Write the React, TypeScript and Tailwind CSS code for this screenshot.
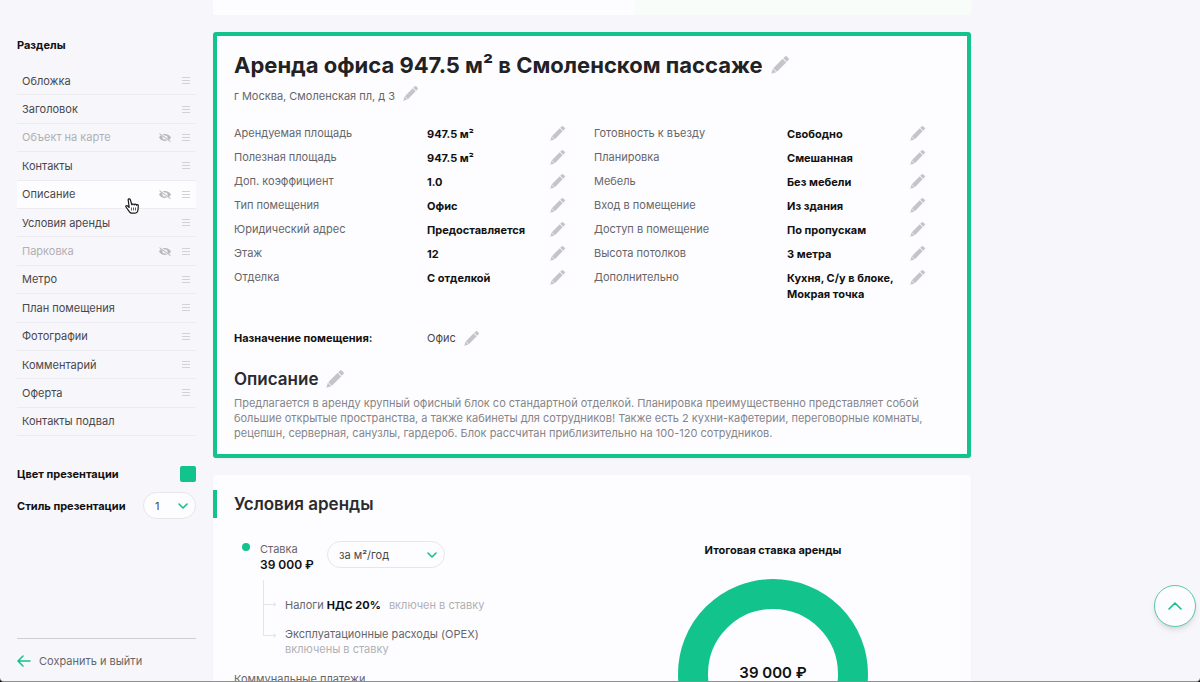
import { useState } from "react";

type Section = {
  name: string;
  hidden?: boolean;
  active?: boolean;
  toggle?: boolean;
  fixed?: boolean;
};

const sections: Section[] = [
  { name: "Обложка" },
  { name: "Заголовок" },
  { name: "Объект на карте", hidden: true, toggle: true },
  { name: "Контакты" },
  { name: "Описание", active: true, toggle: true },
  { name: "Условия аренды" },
  { name: "Парковка", hidden: true, toggle: true },
  { name: "Метро" },
  { name: "План помещения" },
  { name: "Фотографии" },
  { name: "Комментарий" },
  { name: "Оферта" },
  { name: "Контакты подвал", fixed: true },
];

const leftFacts = [
  ["Арендуемая площадь", "947.5 м²"],
  ["Полезная площадь", "947.5 м²"],
  ["Доп. коэффициент", "1.0"],
  ["Тип помещения", "Офис"],
  ["Юридический адрес", "Предоставляется"],
  ["Этаж", "12"],
  ["Отделка", "С отделкой"],
];

const rightFacts = [
  ["Готовность к въезду", "Свободно"],
  ["Планировка", "Смешанная"],
  ["Мебель", "Без мебели"],
  ["Вход в помещение", "Из здания"],
  ["Доступ в помещение", "По пропускам"],
  ["Высота потолков", "3 метра"],
  ["Дополнительно", "Кухня, С/у в блоке, Мокрая точка"],
];

function EditButton({ label, large }: { label: string; large?: boolean }) {
  return (
    <button type="button" aria-label={`Изменить: ${label}`} className="shrink-0 text-[#c5c4ca]">
      <svg viewBox="0 0 16 16" fill="currentColor" className={large ? "size-[18px]" : "size-[15px]"}>
        <path d="M10.9 1.9 12.3.6a1.4 1.4 0 0 1 2 0l1.1 1.1a1.4 1.4 0 0 1 0 2l-1.3 1.4z" />
        <path d="M10.3 2.5 13.5 5.7 5.2 14 2 10.8z" />
        <path d="M1.6 11.3 4.7 14.4.3 15.8z" />
      </svg>
    </button>
  );
}

function EyeOffIcon() {
  return (
    <svg viewBox="0 0 12 9" className="h-[9px] w-3" fill="#b9b9bd">
      <path d="M3.6 1.3C7 .2 10.5 1.6 12 4.5c-.5 1-1.1 1.8-1.9 2.4L8.5 5.7C9.1 3.7 7.7 2 5.5 2.6z" />
      <path d="M1.9 2.2 3.5 3.4C3 5.4 4.5 7 6.7 6.4l1.5 1.2C4.9 8.8 1.5 7.4 0 4.5c.5-.9 1.1-1.7 1.9-2.3z" />
      <path d="M.8.3 11.8 8.2l-.6.8L.2 1.1z" />
    </svg>
  );
}

function Chevron() {
  return (
    <svg
      viewBox="0 0 10 6"
      className="pointer-events-none absolute top-1/2 right-2 h-1.5 w-2.5 -translate-y-1/2"
      fill="none"
      stroke="#15c08a"
      strokeWidth="1.6"
      strokeLinecap="round"
      strokeLinejoin="round"
    >
      <path d="M1 1l4 4 4-4" />
    </svg>
  );
}

function FactList({ items }: { items: string[][] }) {
  return (
    <dl className="flex flex-col gap-[7px]">
      {items.map(([label, value]) => (
        <div key={label} className="flex items-start">
          <dt className="w-[193px] shrink-0 text-[#66666a]">{label}</dt>
          <dd className="flex grow items-start pt-px">
            <span className="w-[123px] font-bold text-[#111]">{value}</span>
            <EditButton label={label} />
          </dd>
        </div>
      ))}
    </dl>
  );
}

function Sidebar() {
  const [style, setStyle] = useState("1");

  return (
    <aside className="flex w-[213px] shrink-0 flex-col px-[17px] pt-[37px] pb-3">
      <h2 className="font-bold text-[#111]">Разделы</h2>
      <ul className="mt-[14px] flex h-[369px] shrink-0 flex-col">
        {sections.map((s) => (
          <li
            key={s.name}
            className={`flex flex-1 items-center border-b border-[#ececf0] pr-1.5 pl-[5px] ${
              s.active ? "bg-[#fdfdff]" : ""
            }`}
          >
            <a href="#" className={`grow ${s.hidden ? "text-[#b0b0b4]" : "text-[#48484b]"}`}>
              {s.name}
            </a>
            {s.toggle && (
              <button type="button" aria-label="Показать или скрыть" className="mr-[11px]">
                <EyeOffIcon />
              </button>
            )}
            {!s.fixed && (
              <svg viewBox="0 0 8 7" className="h-[7px] w-2" stroke="#d2d2d6">
                <path d="M0 .5h8M0 3.5h8M0 6.5h8" />
              </svg>
            )}
          </li>
        ))}
      </ul>

      <div className="mt-[30px] flex items-center justify-between">
        <label htmlFor="color" className="font-bold text-[#111]">
          Цвет презентации
        </label>
        <button id="color" type="button" aria-label="Цвет презентации" className="size-4 rounded-xs bg-[#12c48b]" />
      </div>
      <div className="mt-2.5 flex items-center justify-between">
        <label htmlFor="style" className="font-bold text-[#111]">
          Стиль презентации
        </label>
        <div className="relative">
          <select
            id="style"
            value={style}
            onChange={(e) => setStyle(e.target.value)}
            className="h-[27px] w-[53px] appearance-none rounded-full border border-[#e6e6ea] bg-[#fdfdff] pl-[11px] text-[#48484b]"
          >
            <option>1</option>
            <option>2</option>
            <option>3</option>
          </select>
          <Chevron />
        </div>
      </div>

      <div className="mt-auto border-t border-[#cfcfd1] pt-[14px]">
        <a href="#" className="flex items-center gap-2 text-[#66666a]">
          <svg
            viewBox="0 0 14 12"
            className="h-3 w-3.5"
            fill="none"
            stroke="#15c08a"
            strokeWidth="1.5"
            strokeLinecap="round"
            strokeLinejoin="round"
          >
            <path d="M13 6H1M6 1 1 6l5 5" />
          </svg>
          Сохранить и выйти
        </a>
      </div>
    </aside>
  );
}

function ObjectCard() {
  return (
    <section className="mt-[17px] rounded-[3px] border-4 border-[#12c48b] bg-[#fdfdff] pt-[13px] pr-[13px] pb-[13px] pl-[17px] shadow-xs">
      <div className="flex items-center gap-2">
        <h1 className="text-[22px] leading-8 font-bold text-[#222225]">
          Аренда офиса 947.5 м² в Смоленском пассаже
        </h1>
        <EditButton label="Заголовок" large />
      </div>
      <div className="mt-[5px] flex items-start gap-2 text-[#66666a]">
        <p className="pt-0.5">г Москва, Смоленская пл, д 3</p>
        <EditButton label="Адрес" />
      </div>

      <div className="mt-[21px] grid grid-cols-2">
        <FactList items={leftFacts} />
        <FactList items={rightFacts} />
      </div>

      <div className="mt-7 flex items-center">
        <p className="w-[193px] font-bold text-[#111]">Назначение помещения:</p>
        <p className="mr-2 text-[#48484b]">Офис</p>
        <EditButton label="Назначение помещения" />
      </div>

      <div className="mt-[21px] flex items-center gap-2">
        <h2 className="text-[17px] leading-6 font-semibold text-[#2b2b2e]">Описание</h2>
        <EditButton label="Описание" large />
      </div>
      <p className="mt-[5px] pr-3 leading-[15px] text-[#858589]">
        Предлагается в аренду крупный офисный блок со стандартной отделкой. Планировка преимущественно представляет
        собой большие открытые пространства, а также кабинеты для сотрудников! Также есть 2 кухни-кафетерии,
        переговорные комнаты, рецепшн, серверная, санузлы, гардероб. Блок рассчитан приблизительно на 100-120
        сотрудников.
      </p>
    </section>
  );
}

function RentTerms() {
  return (
    <section className="mt-[17px] rounded-[3px] bg-[#fdfdff] pt-[15px] shadow-xs">
      <h2 className="border-l-4 border-[#12c48b] pl-[17px] text-[17px] leading-7 font-semibold text-[#2b2b2e]">
        Условия аренды
      </h2>
      <div className="flex">
        <div className="w-[362px] shrink-0 pt-[23px] pl-[21px]">
          <div className="flex items-start pl-2">
            <span className="mt-0.5 mr-2.5 size-2 rounded-full bg-[#12c48b]" />
            <p className="w-[67px] text-[#66666a]">
              Ставка
              <strong className="block text-xs font-semibold whitespace-nowrap text-[#111]">39 000 ₽</strong>
            </p>
            <div className="relative">
              <select
                aria-label="Единица ставки"
                className="h-[27px] w-[118px] appearance-none rounded-full border border-[#e6e6ea] bg-[#fdfdff] pl-[11px] text-[#48484b]"
              >
                <option>за м²/год</option>
                <option>за м²/мес</option>
              </select>
              <Chevron />
            </div>
          </div>

          <div className="mt-[7px] flex gap-2 pl-[29px]">
            <svg viewBox="0 0 14 58" className="h-[58px] w-3.5" fill="none" stroke="#e4e4e8">
              <path d="M.5 0v55.5H13M.5 24.5H13M10.5 22.5l2.5 2-2.5 2M10.5 53.5l2.5 2-2.5 2" />
            </svg>
            <ul className="text-[#66666a]">
              <li className="pt-[17px]">
                Налоги <strong className="font-bold text-[#111]">НДС 20%</strong>
                <span className="ml-2 text-[#b0b0b4]">включен в ставку</span>
              </li>
              <li className="mt-[14px] leading-[15px]">
                Эксплуатационные расходы (OPEX)
                <span className="block text-[#b0b0b4]">включены в ставку</span>
              </li>
            </ul>
          </div>
          <p className="mt-[14px] text-[#66666a]">Коммунальные платежи</p>
        </div>

        <div className="flex flex-1 flex-col items-center px-[38px] pt-6">
          <h3 className="font-bold text-[#111]">Итоговая ставка аренды</h3>
          <svg viewBox="0 0 190 190" className="mt-[21px] size-[190px]">
            <circle cx="95" cy="95" r="80" fill="none" stroke="#12c48b" strokeWidth="30" />
            <text x="95" y="99" textAnchor="middle" className="fill-[#111] text-[15px] font-semibold">
              39 000 ₽
            </text>
          </svg>
        </div>
      </div>
    </section>
  );
}

export default function App() {
  return (
    <div className="h-screen bg-black font-['Inter','Noto_Sans',sans-serif] text-[11px] leading-4">
      <div className="relative flex h-full overflow-hidden rounded-b-[4px] border-b border-[#8f8f92] bg-[#f7f6fb]">
        <Sidebar />
        <main className="w-full max-w-[758px] min-w-0">
          <div className="flex h-[15px] bg-[#fdfdff]">
            <div className="ml-auto w-[336px] bg-[#f8fdf9]" />
          </div>
          <ObjectCard />
          <RentTerms />
        </main>

        <button
          type="button"
          aria-label="Наверх"
          className="absolute right-1 bottom-[54px] flex size-[42px] items-center justify-center rounded-full border border-[#5cc9a4] bg-[#fdfdff] shadow-md"
        >
          <svg
            viewBox="0 0 14 8"
            className="h-2 w-3.5"
            fill="none"
            stroke="#15c08a"
            strokeWidth="1.6"
            strokeLinecap="round"
            strokeLinejoin="round"
          >
            <path d="M1 7l6-6 6 6" />
          </svg>
        </button>

        {/* hand cursor over the active section */}
        <svg
          viewBox="0 0 14 16"
          className="pointer-events-none absolute top-[198px] left-[125px] h-4 w-3.5"
          fill="#fff"
          stroke="#1b1b1d"
          strokeWidth="1.2"
          strokeLinejoin="round"
        >
          <path d="M4.2 9.5 2.7 8C1.5 7.2.4 8 1 9l3.5 4.8c.6.9 1.3 1.4 2.3 1.4h2.7c2.2 0 3.3-1.5 3.5-3.5l.3-4c0-1.3-1.5-1.5-1.8-.4-.1-1.4-2-1.6-2.3-.3-.2-1.3-2-1.4-2.3-.1L5.3 1.7C4.8.3 2.9.8 3.2 2.2z" />
          <path d="M6.5 9.5v3M8.5 9.5v3M10.5 9.5v3" strokeWidth=".7" />
        </svg>
      </div>
    </div>
  );
}
